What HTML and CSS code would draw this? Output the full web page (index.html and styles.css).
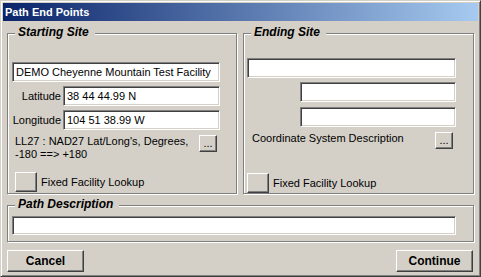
FILE: index.html
```html
<!DOCTYPE html>
<html lang="en">
<head>
    <meta charset="UTF-8">
    <title>Path End Points</title>
    <link rel="stylesheet" href="styles.css">
</head>
<body>
    <div class="window">
        <div class="titlebar">Path End Points</div>
        <div class="content">
            <div class="sites">
                <!-- Starting Site -->
                <div class="group site-start">
                    <div class="group-title">Starting Site</div>
                    <div class="field name">DEMO Cheyenne Mountain Test Facility</div>
                    <div class="row">
                        <span class="label">Latitude</span>
                        <div class="field coord-field">38 44 44.99 N</div>
                    </div>
                    <div class="row">
                        <span class="label">Longitude</span>
                        <div class="field coord-field">104 51 38.99 W</div>
                    </div>
                    <div class="coord">
                        <span class="coord-text">LL27 : NAD27 Lat/Long's, Degrees,<br>-180 ==&gt; +180</span>
                        <button class="btn dots">...</button>
                    </div>
                    <div class="lookup">
                        <button class="btn square"></button>
                        <span>Fixed Facility Lookup</span>
                    </div>
                </div>
                <!-- Ending Site -->
                <div class="group site-end">
                    <div class="group-title">Ending Site</div>
                    <div class="field end-name"></div>
                    <div class="field end-coord"></div>
                    <div class="field end-coord third"></div>
                    <div class="coord end">
                        <span class="coord-text">Coordinate System Description</span>
                        <button class="btn dots">...</button>
                    </div>
                    <div class="lookup end">
                        <button class="btn square"></button>
                        <span>Fixed Facility Lookup</span>
                    </div>
                </div>
            </div>
            <div class="group path">
                <div class="group-title">Path Description</div>
                <div class="field path-field"></div>
            </div>
            <div class="buttons">
                <button class="btn action">Cancel</button>
                <button class="btn action">Continue</button>
            </div>
        </div>
    </div>
</body>
</html>
```

FILE: styles.css
```css
body {
    margin: 0;
    font-family: "Liberation Sans", Arial, sans-serif;
    font-size: 11px;
    color: #000;
}

.window {
    width: 481px;
    height: 277px;
    box-sizing: border-box;
    background-color: #d4d0c8;
    border: 1px solid;
    border-color: #d4d0c8 #404040 #404040 #d4d0c8;
    box-shadow: inset 1px 1px #fff, inset -1px -1px #808080;
    padding: 2px;
}

.titlebar {
    height: 18px;
    line-height: 18px;
    padding-left: 2px;
    color: #fff;
    font-weight: bold;
    font-size: 11px;
    background: linear-gradient(to right, #0a246a, #a6caf0);
}

.content {
    padding: 12px 4px 0 4px;
}

.sites {
    display: flex;
    gap: 6px;
}

.group {
    position: relative;
    box-sizing: border-box;
    border: 1px solid #808080;
    box-shadow: inset 1px 1px #fff, 1px 1px #fff;
}

.group-title {
    position: absolute;
    top: -9px;
    left: 7px;
    padding: 0 6px 0 3px;
    background-color: #d4d0c8;
    font-size: 12px;
    font-weight: bold;
    font-style: italic;
    line-height: 14px;
}

.site-start {
    width: 230px;
    height: 161px;
    padding: 28px 0 0 4px;
}

.site-end {
    flex: 1;
    height: 161px;
    padding: 24px 0 0 3px;
}

.field {
    box-sizing: border-box;
    height: 20px;
    line-height: 18px;
    padding-left: 3px;
    background-color: #fff;
    border: 1px solid;
    border-color: #808080 #fff #fff #808080;
    box-shadow: inset 1px 1px #404040, inset -1px -1px #d4d0c8;
    white-space: nowrap;
    overflow: hidden;
}

.name {
    width: 208px;
}

.row {
    display: flex;
    align-items: center;
    gap: 2px;
    margin-top: 4px;
}

.label {
    width: 49px;
    text-align: right;
}

.coord-field {
    width: 157px;
}

.coord {
    display: flex;
    align-items: flex-start;
    justify-content: space-between;
    width: 202px;
    margin: 5px 0 0 3px;
    line-height: 13px;
}

.coord.end {
    width: 201px;
    margin: 5px 0 0 5px;
}

.btn {
    box-sizing: border-box;
    background-color: #d4d0c8;
    border: 1px solid;
    border-color: #fff #404040 #404040 #fff;
    box-shadow: inset -1px -1px #808080;
    font-family: "Liberation Sans", Arial, sans-serif;
    padding: 0;
    color: #000;
}

.dots {
    width: 18px;
    height: 17px;
    font-size: 11px;
    line-height: 11px;
}

.lookup {
    display: flex;
    align-items: center;
    gap: 4px;
    margin: 11px 0 0 3px;
}

.lookup.end {
    margin: 24px 0 0 0;
}

.square {
    width: 22px;
    height: 20px;
}

.end-name {
    width: 209px;
}

.end-coord {
    width: 156px;
    margin: 4px 0 0 53px;
}

.end-coord.third {
    margin-top: 5px;
}

.path {
    height: 37px;
    margin-top: 11px;
    padding: 10px 0 0 4px;
}

.path-field {
    width: 444px;
    height: 19px;
}

.buttons {
    display: flex;
    justify-content: space-between;
    margin-top: 8px;
    padding-right: 1px;
}

.action {
    width: 77px;
    height: 22px;
    font-size: 12px;
    font-weight: bold;
}
```
